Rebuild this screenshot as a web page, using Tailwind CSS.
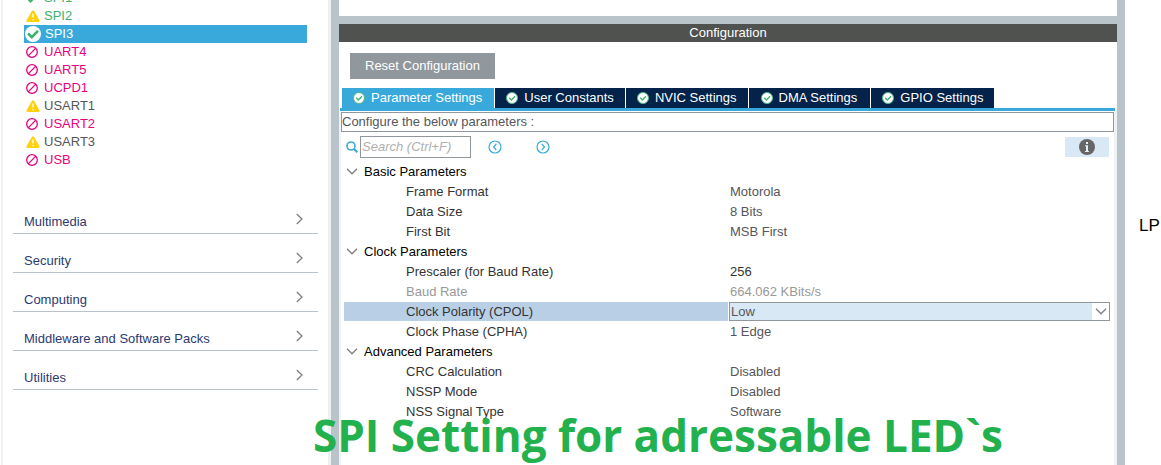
<!DOCTYPE html>
<html lang="en">
<head>
<meta charset="utf-8">
<title>SPI3 Configuration</title>
<script src="https://cdn.jsdelivr.net/npm/@tailwindcss/browser@4"></script>
</head>
<body class="relative flex h-screen overflow-hidden bg-white font-['Liberation_Sans',Arial,sans-serif] text-[13px] leading-[18px] text-[#55565a]">
<svg class="hidden">
  <symbol id="warn" viewBox="0 0 14 12"><path d="M6 .8Q7 -.4 8 .8L13.6 10.400Q13.900 12 12.500 12H1.500Q.1 12 .4 10.400Z" fill="#ffd10a"/><path d="M7 3.500V7.500M7 9V10.300" stroke="#fff" stroke-width="1.300"/></symbol>
  <symbol id="ban" viewBox="0 0 12 12"><circle cx="6" cy="6" r="5.300" fill="none" stroke="#e6007e" stroke-width="1.300"/><path d="M2.400 9.600L9.600 2.400" stroke="#e6007e" stroke-width="1.300"/></symbol>
  <symbol id="tick" viewBox="0 0 12 12"><path d="M1.200 5.800L4.600 9.200L10.800 3" fill="none" stroke="#3cb46e" stroke-width="2.400"/></symbol>
  <symbol id="tickbig" viewBox="0 0 16 16"><circle cx="8" cy="8" r="8" fill="#fff"/><path d="M3 7.500L6.800 11.200L13 4.800" fill="none" stroke="#3cb06c" stroke-width="2.600"/></symbol>
  <symbol id="tabtick" viewBox="0 0 12 12"><circle cx="6" cy="6" r="5.500" fill="#fff" stroke="#52b788" stroke-width="1"/><path d="M3.200 5.800L5.400 8L9 4.300" fill="none" stroke="#3cb46e" stroke-width="1.300"/></symbol>
  <symbol id="right" viewBox="0 0 7 12"><path d="M.8 1L6 6L.8 11" fill="none" stroke="#808080" stroke-width="1.300"/></symbol>
  <symbol id="down" viewBox="0 0 12 7"><path d="M1 .8L6 5.800L11 .8" fill="none" stroke="#808080" stroke-width="1.300"/></symbol>
</svg>

<aside class="flex w-[331px] shrink-0 flex-col border-r-[3px] border-[#f0f0f0] bg-white">
  <div class="ml-px flex-1 border-l-2 border-[#f0f0f0] pr-[10px] pl-[10px]">
    <ul class="-mt-[11px] mr-[11px] ml-[11px] text-[#e6007e]">
      <li class="flex h-[18px] items-center gap-[6px] pl-[2px] text-[#3cb06c]"><svg class="h-3 w-3"><use href="#tick"/></svg>SPI1</li>
      <li class="flex h-[18px] items-center gap-1 pl-[2px] text-[#3cb06c]"><svg class="h-3 w-[14px]"><use href="#warn"/></svg>SPI2</li>
      <li class="flex h-[18px] items-center gap-1 bg-[#39a9dc] pl-px text-white"><svg class="h-4 w-4"><use href="#tickbig"/></svg>SPI3</li>
      <li class="flex h-[18px] items-center gap-[6px] pl-[2px]"><svg class="h-3 w-3"><use href="#ban"/></svg>UART4</li>
      <li class="flex h-[18px] items-center gap-[6px] pl-[2px]"><svg class="h-3 w-3"><use href="#ban"/></svg>UART5</li>
      <li class="flex h-[18px] items-center gap-[6px] pl-[2px]"><svg class="h-3 w-3"><use href="#ban"/></svg>UCPD1</li>
      <li class="flex h-[18px] items-center gap-1 pl-[2px] text-[#55565a]"><svg class="h-3 w-[14px]"><use href="#warn"/></svg>USART1</li>
      <li class="flex h-[18px] items-center gap-[6px] pl-[2px]"><svg class="h-3 w-3"><use href="#ban"/></svg>USART2</li>
      <li class="flex h-[18px] items-center gap-1 pl-[2px] text-[#55565a]"><svg class="h-3 w-[14px]"><use href="#warn"/></svg>USART3</li>
      <li class="flex h-[18px] items-center gap-[6px] pl-[2px]"><svg class="h-3 w-3"><use href="#ban"/></svg>USB</li>
    </ul>
    <nav class="mt-[26px] text-[#2b3a70]">
      <button class="flex h-[39px] w-full items-center justify-between border-b border-[#b8c4ca] pt-4 pr-[15px] pl-[11px]">Multimedia<svg class="mb-[6px] h-3 w-[7px]"><use href="#right"/></svg></button>
      <button class="flex h-[39px] w-full items-center justify-between border-b border-[#b8c4ca] pt-4 pr-[15px] pl-[11px]">Security<svg class="mb-[6px] h-3 w-[7px]"><use href="#right"/></svg></button>
      <button class="flex h-[39px] w-full items-center justify-between border-b border-[#b8c4ca] pt-4 pr-[15px] pl-[11px]">Computing<svg class="mb-[6px] h-3 w-[7px]"><use href="#right"/></svg></button>
      <button class="flex h-[39px] w-full items-center justify-between border-b border-[#b8c4ca] pt-4 pr-[15px] pl-[11px]">Middleware and Software Packs<svg class="mb-[6px] h-3 w-[7px]"><use href="#right"/></svg></button>
      <button class="flex h-[39px] w-full items-center justify-between border-b border-[#b8c4ca] pt-4 pr-[15px] pl-[11px]">Utilities<svg class="mb-[6px] h-3 w-[7px]"><use href="#right"/></svg></button>
    </nav>
  </div>
</aside>

<main class="flex min-w-0 flex-1 flex-col border-x-8 border-[#b8c4ca] bg-white">
  <div class="h-4"></div>
  <div class="h-2 bg-[#b8c4ca]"></div>
  <h1 class="h-[18px] bg-[#505250] text-center text-white">Configuration</h1>
  <div class="px-[11px] pt-[11px] pb-[9px]">
    <button class="h-[26px] bg-[#90979d] px-[15px] text-white">Reset Configuration</button>
  </div>
  <div class="ml-px mr-[2px] flex gap-px border-b-[3px] border-[#39a9dc] pl-[2px] text-white" role="tablist">
    <button role="tab" aria-selected="true" class="flex h-5 items-center gap-[6px] bg-[#39a9dc] pr-3 pl-[11px]"><svg class="h-3 w-3"><use href="#tabtick"/></svg>Parameter Settings</button>
    <button role="tab" class="flex h-5 items-center gap-[6px] bg-[#03234b] px-[11px]"><svg class="h-3 w-3"><use href="#tabtick"/></svg>User Constants</button>
    <button role="tab" class="flex h-5 items-center gap-[6px] bg-[#03234b] px-[11px]"><svg class="h-3 w-3"><use href="#tabtick"/></svg>NVIC Settings</button>
    <button role="tab" class="flex h-5 items-center gap-[6px] bg-[#03234b] pr-[13px] pl-3"><svg class="h-3 w-3"><use href="#tabtick"/></svg>DMA Settings</button>
    <button role="tab" class="flex h-5 items-center gap-[6px] bg-[#03234b] px-[11px]"><svg class="h-3 w-3"><use href="#tabtick"/></svg>GPIO Settings</button>
  </div>
  <section class="flex-1 border-r-[3px] border-l-2 border-[#f0f2f4] pt-px">
    <p class="h-5 border border-[#90979d]">Configure the below parameters :</p>
    <div class="flex h-[29px] items-center pr-[5px] pl-[5px]">
      <svg class="h-3 w-3" viewBox="0 0 12 12"><circle cx="5" cy="5" r="4" fill="none" stroke="#39a9dc" stroke-width="1.600"/><path d="M7.800 7.800L11.300 11.300" stroke="#39a9dc" stroke-width="2"/></svg>
      <input type="text" aria-label="Search" placeholder="Search (Ctrl+F)" class="ml-[2px] h-[22px] w-[111px] border border-[#90979d] px-px placeholder:text-[#b0b0b0] placeholder:italic">
      <button aria-label="Previous" class="ml-[17px]"><svg class="h-[14px] w-[14px]" viewBox="0 0 14 14" fill="none" stroke="#39a9dc" stroke-width="1.200"><circle cx="7" cy="7" r="6"/><path d="M8.300 4L5.500 7L8.300 10"/></svg></button>
      <button aria-label="Next" class="ml-[34px]"><svg class="h-[14px] w-[14px]" viewBox="0 0 14 14" fill="none" stroke="#39a9dc" stroke-width="1.200"><circle cx="7" cy="7" r="6"/><path d="M5.700 4L8.500 7L5.700 10"/></svg></button>
      <button aria-label="Information" class="ml-auto flex h-5 w-11 items-center justify-center bg-[#d9e8f5]"><svg class="h-4 w-4" viewBox="0 0 16 16"><circle cx="8" cy="8" r="8" fill="#666"/><path d="M7 3H9V5H7ZM6 6.300H9V12H10V13H6V12H7V7.300H6Z" fill="#e4eef6"/></svg></button>
    </div>
    <div class="pr-1 pl-[3px]">
    <table class="w-full table-fixed border-collapse text-left">
      <colgroup><col class="w-[385px]"><col></colgroup>
      <tbody>
        <tr class="h-5"><th colspan="2" class="p-0 pt-[2px] font-normal text-black"><span class="flex items-center gap-[6px] pl-[2px]"><svg class="mb-[2px] h-[7px] w-3"><use href="#down"/></svg>Basic Parameters</span></th></tr>
        <tr class="h-5"><td class="p-0 pt-[2px] pl-[62px] text-[#333]">Frame Format</td><td class="p-0 pt-[2px] pl-px">Motorola</td></tr>
        <tr class="h-5"><td class="p-0 pt-[2px] pl-[62px] text-[#333]">Data Size</td><td class="p-0 pt-[2px] pl-px">8 Bits</td></tr>
        <tr class="h-5"><td class="p-0 pt-[2px] pl-[62px] text-[#333]">First Bit</td><td class="p-0 pt-[2px] pl-px">MSB First</td></tr>
        <tr class="h-5"><th colspan="2" class="p-0 pt-[2px] font-normal text-black"><span class="flex items-center gap-[6px] pl-[2px]"><svg class="mb-[2px] h-[7px] w-3"><use href="#down"/></svg>Clock Parameters</span></th></tr>
        <tr class="h-5"><td class="p-0 pt-[2px] pl-[62px] text-[#333]">Prescaler (for Baud Rate)</td><td class="p-0 pt-[2px] pl-px text-[#333]">256</td></tr>
        <tr class="h-5 text-[#999]"><td class="p-0 pt-[2px] pl-[62px]">Baud Rate</td><td class="p-0 pt-[2px] pl-px">664.062 KBits/s</td></tr>
        <tr class="h-5"><td class="p-0 pr-px"><label for="cpol" class="block h-[19px] bg-[#b8cfe5] pl-[62px] leading-5 text-[#333]">Clock Polarity (CPOL)</label></td>
          <td class="p-0"><div class="relative"><select id="cpol" class="block h-[19px] w-full appearance-none border border-[#90979d] bg-[#d9e8f5] pl-px"><option>Low</option><option>High</option></select><span class="pointer-events-none absolute inset-y-px right-px flex w-[17px] items-center justify-center bg-white"><svg class="h-[7px] w-3"><use href="#down"/></svg></span></div></td></tr>
        <tr class="h-5"><td class="p-0 pt-[2px] pl-[62px] text-[#333]">Clock Phase (CPHA)</td><td class="p-0 pt-[2px] pl-px">1 Edge</td></tr>
        <tr class="h-5"><th colspan="2" class="p-0 pt-[2px] font-normal text-black"><span class="flex items-center gap-[6px] pl-[2px]"><svg class="mb-[2px] h-[7px] w-3"><use href="#down"/></svg>Advanced Parameters</span></th></tr>
        <tr class="h-5"><td class="p-0 pt-[2px] pl-[62px] text-[#333]">CRC Calculation</td><td class="p-0 pt-[2px] pl-px">Disabled</td></tr>
        <tr class="h-5"><td class="p-0 pt-[2px] pl-[62px] text-[#333]">NSSP Mode</td><td class="p-0 pt-[2px] pl-px">Disabled</td></tr>
        <tr class="h-5"><td class="p-0 pt-[2px] pl-[62px] text-[#333]">NSS Signal Type</td><td class="p-0 pt-[2px] pl-px">Software</td></tr>
      </tbody>
    </table>
    </div>
  </section>
</main>

<aside class="w-9 shrink-0 overflow-hidden bg-white pt-[217px] pl-[14px] text-[17px] text-black">LP</aside>

<p class="absolute top-[405px] left-[313px] font-['Open_Sans','Noto_Sans',sans-serif] text-[44px] leading-[60px] font-bold whitespace-nowrap text-[#22b14c]">SPI Setting for adressable LED`s</p>
</body>
</html>
